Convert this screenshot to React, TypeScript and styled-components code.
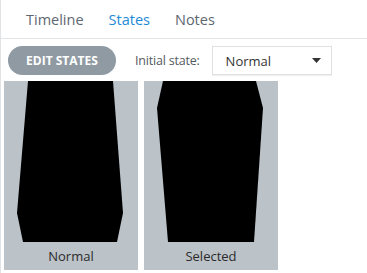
import React from 'react'
import styled, { createGlobalStyle } from 'styled-components'

const GlobalStyle = createGlobalStyle`
  html, body {
    margin: 0;
    padding: 0;
    background: #ffffff;
  }
  body {
    font-family: "Open Sans", "Noto Sans", sans-serif;
  }
`

type Tab = { label: string; active?: boolean }

const tabs: Tab[] = [
  { label: 'Timeline' },
  { label: 'States', active: true },
  { label: 'Notes' },
]

type StateCard = { name: string; points: string }

const states: StateCard[] = [
  { name: 'Normal', points: '24,0 109,0 119,132 113,161 19,161 13,132' },
  { name: 'Selected', points: '19,0 112,0 119,27 110,161 24,161 13,27' },
]

export default function App() {
  return (
    <>
      <GlobalStyle />
      <Panel>
        <TabBar>
          {tabs.map((t) => (
            <TabItem key={t.label} $active={t.active}>
              {t.label}
            </TabItem>
          ))}
        </TabBar>
        <Toolbar>
          <EditButton>EDIT STATES</EditButton>
          <FieldLabel>Initial state:</FieldLabel>
          <Select>
            <span>Normal</span>
            <svg width="9" height="5" viewBox="0 0 9 5">
              <polygon points="0,0 9,0 4.5,5" fill="#333" />
            </svg>
          </Select>
        </Toolbar>
        <CardRow>
          {states.map((s) => (
            <Card key={s.name}>
              <Shape width="134" height="161" viewBox="0 0 134 161">
                <polygon points={s.points} fill="#000" />
              </Shape>
              <CardLabel>{s.name}</CardLabel>
            </Card>
          ))}
        </CardRow>
      </Panel>
    </>
  )
}

const Panel = styled.div`
  width: 367px;
  height: 273px;
  box-sizing: border-box;
  border-left: 1px solid #e1e4e7;
  overflow: hidden;
`

const TabBar = styled.div`
  display: flex;
  align-items: center;
  gap: 25px;
  height: 38px;
  padding-left: 25px;
  border-bottom: 1px solid #e3e6e9;
`

const TabItem = styled.div<{ $active?: boolean }>`
  font-size: 14.5px;
  color: ${(p) => (p.$active ? '#1e8ad6' : '#5e6670')};
`

const Toolbar = styled.div`
  display: flex;
  align-items: center;
  margin-top: 7px;
  padding-left: 7px;
  height: 29px;
`

const EditButton = styled.div`
  display: flex;
  align-items: center;
  justify-content: center;
  width: 108px;
  height: 29px;
  border-radius: 15px;
  background: #8f9aa3;
  color: #ffffff;
  font-size: 12px;
  font-weight: 700;
`

const FieldLabel = styled.div`
  margin-left: 19px;
  font-size: 12.5px;
  letter-spacing: -0.2px;
  color: #555b61;
`

const Select = styled.div`
  display: flex;
  align-items: center;
  justify-content: space-between;
  box-sizing: border-box;
  margin-left: 12px;
  width: 120px;
  height: 29px;
  padding: 0 10px 0 13px;
  border: 1px solid #dfe2e5;
  box-shadow: 0 1px 1px rgba(0, 0, 0, 0.06);
  font-size: 13px;
  color: #333;
`

const CardRow = styled.div`
  display: flex;
  gap: 6px;
  margin-top: 6px;
  padding-left: 3px;
`

const Card = styled.div`
  display: flex;
  flex-direction: column;
  width: 134px;
  height: 189px;
  background: #bbc2c8;
`

const Shape = styled.svg`
  display: block;
`

const CardLabel = styled.div`
  flex: 1;
  display: flex;
  align-items: center;
  justify-content: center;
  font-size: 13px;
  color: #2b2b2b;
`
